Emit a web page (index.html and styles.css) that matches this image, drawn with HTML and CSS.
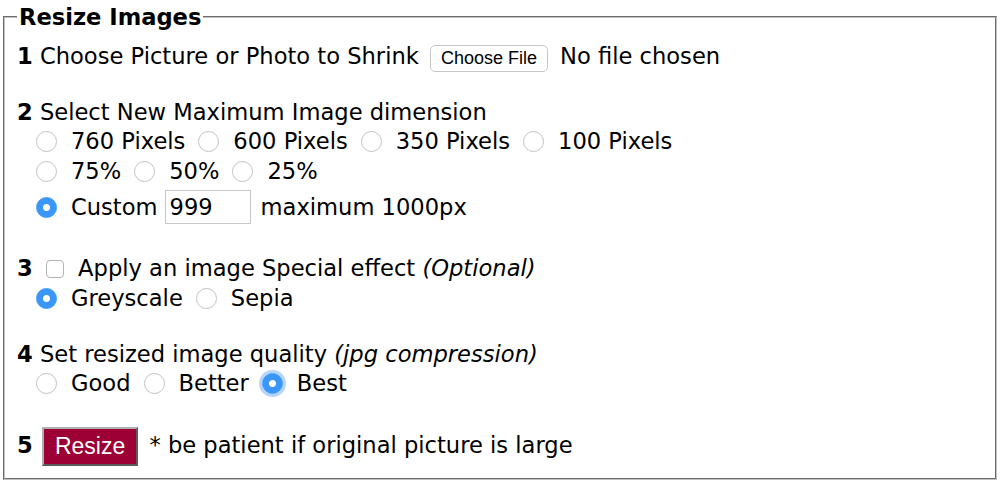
FILE: index.html
```html
<!DOCTYPE html>
<html>
<head>
    <link rel="stylesheet" href="styles.css">
</head>
<body>

<form class="resizer" onsubmit="return false">
<fieldset>
    <legend>Resize Images</legend>

    <!-- buoc 1: chon anh -->
    <div class="line">
        <b>1</b> Choose Picture or Photo to Shrink <input type="file" class="picker">
    </div>

    <!-- buoc 2: kich thuoc -->
    <div class="step">
        <div class="head"><b>2</b> Select New Maximum Image dimension</div>
        <div class="opts">
            <label class="opt"><input type="radio" name="size" value="760">760 Pixels</label>
            <label class="opt"><input type="radio" name="size" value="600">600 Pixels</label>
            <label class="opt"><input type="radio" name="size" value="350">350 Pixels</label>
            <label class="opt"><input type="radio" name="size" value="100">100 Pixels</label>
        </div>
        <div class="opts">
            <label class="opt"><input type="radio" name="size" value="75%">75%</label>
            <label class="opt"><input type="radio" name="size" value="50%">50%</label>
            <label class="opt"><input type="radio" name="size" value="25%">25%</label>
        </div>
        <div class="opts custom">
            <label class="opt"><input type="radio" name="size" value="custom" checked>Custom</label>
            <input type="text" class="max" value="999">
            <span>maximum 1000px</span>
        </div>
    </div>

    <!-- buoc 3: hieu ung -->
    <div class="step">
        <div class="line"><b>3</b> <input type="checkbox" class="fx"> Apply an image Special effect <i>(Optional)</i></div>
        <div class="opts">
            <label class="opt"><input type="radio" name="effect" value="grey" checked>Greyscale</label>
            <label class="opt"><input type="radio" name="effect" value="sepia">Sepia</label>
        </div>
    </div>

    <!-- buoc 4: chat luong -->
    <div class="step">
        <div class="head"><b>4</b> Set resized image quality <i>(jpg compression)</i></div>
        <div class="opts">
            <label class="opt"><input type="radio" name="quality" value="good">Good</label>
            <label class="opt"><input type="radio" name="quality" value="better">Better</label>
            <label class="opt"><input type="radio" name="quality" value="best" class="focus" checked>Best</label>
        </div>
    </div>

    <!-- buoc 5 -->
    <div class="step submit">
        <b>5</b> <button type="submit" class="go">Resize</button> * be patient if original picture is large
    </div>
</fieldset>
</form>

</body>
</html>
```

FILE: styles.css
```css
body {
    margin: 4px 3px 0 3px;
    font-family: "DejaVu Sans", Verdana, sans-serif;
    font-size: 22.6px;
    color: #000;
    background: #fff;
}
fieldset {
    margin: 0;
    padding: 11px 12px 13px 12px;
    border: 2px groove #c0c0c0;
}
legend {
    font-weight: bold;
    padding: 0 2px;
}
.line {
    height: 30px;
    line-height: 30px;
    white-space: nowrap;
}
.head {
    height: 27px;
    line-height: 27px;
    white-space: nowrap;
}
.step {
    margin-top: 28px;
}
.step.submit {
    margin-top: 27px;
    height: 40px;
    line-height: 40px;
    white-space: nowrap;
}
.opts {
    display: flex;
    align-items: center;
    gap: 13px;
    height: 30px;
    padding-left: 19px;
}
.opts.custom {
    height: 36px;
    margin-top: 3px;
    gap: 7px;
}
.opts.custom .max {
    margin-right: 3px;
}
.opt {
    display: flex;
    align-items: center;
    gap: 14px;
}
input[type=radio] {
    appearance: none;
    -webkit-appearance: none;
    box-sizing: border-box;
    width: 21px;
    height: 21px;
    margin: 0;
    border: 1px solid #c2c2c2;
    border-radius: 50%;
    background: #fff;
}
input[type=radio]:checked {
    border-color: #3a97f7;
    background: radial-gradient(circle, #fff 0, #fff 3px, #3a97f7 4px);
}
input[type=radio].focus {
    box-shadow: 0 0 0 3px rgba(90, 160, 240, 0.45);
}
.fx {
    appearance: none;
    -webkit-appearance: none;
    box-sizing: border-box;
    width: 18px;
    height: 18px;
    margin: 0 7px 0 6px;
    border: 1px solid #b3b3b3;
    border-radius: 4px;
    background: #fff;
    vertical-align: -2px;
}
.max {
    box-sizing: border-box;
    width: 86px;
    height: 34px;
    margin: 0;
    padding: 0 4px;
    border: 1px solid #c8c8c8;
    font-family: "DejaVu Sans", Verdana, sans-serif;
    font-size: 22.6px;
    color: #000;
}
.picker {
    font-family: "DejaVu Sans", Verdana, sans-serif;
    font-size: 22.6px;
    margin-left: 4px;
}
.picker::file-selector-button {
    box-sizing: border-box;
    height: 27px;
    margin: 0 12px 0 0;
    padding: 0 10px;
    font-family: "Liberation Sans", Arial, sans-serif;
    font-size: 18px;
    color: #000;
    background: #fff;
    border: 1px solid #c6c6c6;
    border-radius: 5px;
}
.go {
    box-sizing: border-box;
    height: 39px;
    margin: 0 4px 0 2px;
    padding: 0 11px;
    font-family: "Liberation Sans", Arial, sans-serif;
    font-size: 23px;
    line-height: 35px;
    color: #fff;
    background-color: #9c0035;
    border: 2px outset #b0b0b0;
    vertical-align: middle;
}
```
